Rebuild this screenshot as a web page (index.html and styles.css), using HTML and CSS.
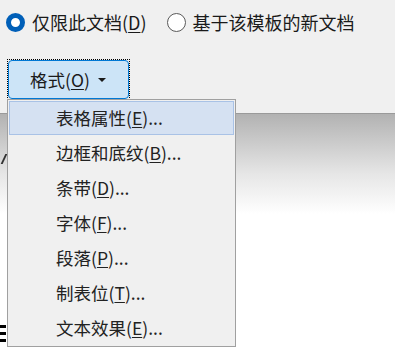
FILE: index.html
```html
<!DOCTYPE html>
<html>
<head>
    <title>格式</title>
    <link rel="stylesheet" href="styles.css">
</head>
<body>
    <div class="dialog">
        <div class="radio-row">
            <label class="radio">
                <span class="radio-dot checked"></span>
                <span>仅限此文档(<u>D</u>)</span>
            </label>
            <label class="radio">
                <span class="radio-dot"></span>
                <span>基于该模板的新文档</span>
            </label>
        </div>

        <div class="focus-ring">
            <div class="format-btn">
                <span>格式(<u>O</u>)</span>
                <span class="caret"></span>
            </div>
        </div>

        <div class="doc-area">
            <span class="doc-mark"></span>
            <div class="doc-lines">
                <span></span><span></span><span></span>
            </div>
        </div>

        <div class="menu">
            <div class="menu-item active">表格属性(<u>E</u>)...</div>
            <div class="menu-item">边框和底纹(<u>B</u>)...</div>
            <div class="menu-item">条带(<u>D</u>)...</div>
            <div class="menu-item">字体(<u>F</u>)...</div>
            <div class="menu-item">段落(<u>P</u>)...</div>
            <div class="menu-item">制表位(<u>T</u>)...</div>
            <div class="menu-item">文本效果(<u>E</u>)...</div>
        </div>
    </div>
</body>
</html>
```

FILE: styles.css
```css
html, body {
    margin: 0;
    padding: 0;
    height: 100%;
    overflow: hidden;
}
body {
    font-family: "Noto Sans CJK SC", "Noto Sans", sans-serif;
    font-size: 17.5px;
    color: #1a1a1a;
    background-color: #f0f0f0;
}
u {
    text-decoration-thickness: 1px;
    text-underline-offset: 2px;
}
.dialog {
    position: relative;
    height: 347px;
    display: flex;
    flex-direction: column;
}
.radio-row {
    display: flex;
    align-items: center;
    height: 44px;
    padding-left: 6px;
    gap: 20px;
    font-size: 18px;
}
.radio {
    display: flex;
    align-items: center;
    gap: 7px;
    line-height: 20px;
}
.radio-dot {
    width: 19px;
    height: 19px;
    box-sizing: border-box;
    border-radius: 50%;
    border: 1px solid #5a5a5a;
    background: #fff;
}
.radio-dot.checked {
    border: 5px solid #005fb8;
    background: #fff;
}
.focus-ring {
    margin-top: 15px;
    margin-left: 7px;
    width: 123px;
    height: 41px;
    box-sizing: border-box;
    border: 1px dotted #000;
}
.format-btn {
    height: 100%;
    box-sizing: border-box;
    border: 1px solid #0078d4;
    border-radius: 4px;
    background: #cce4f7;
    display: flex;
    align-items: center;
    padding-left: 21px;
    gap: 8px;
    line-height: 20px;
}
.caret {
    width: 0;
    height: 0;
    border-left: 4px solid transparent;
    border-right: 4px solid transparent;
    border-top: 4px solid #1a1a1a;
    margin-top: 1px;
}
.doc-area {
    position: relative;
    flex: 1;
    margin-top: 13px;
    border-top: 1px solid #9a9a9a;
    background: linear-gradient(#b2b2b2 0px, #e6e6e6 60px, #ffffff 100px, #ffffff 100%);
    overflow: hidden;
}
.doc-mark {
    position: absolute;
    left: 3px;
    top: 40px;
    width: 2px;
    height: 10px;
    background: #333;
    transform: skewX(-25deg);
}
.doc-lines {
    position: absolute;
    left: 0;
    top: 211px;
    display: flex;
    flex-direction: column;
    gap: 4px;
}
.doc-lines span {
    display: block;
    width: 6px;
    height: 3px;
    background: #000;
}
.menu {
    position: absolute;
    left: 7px;
    top: 99px;
    width: 229px;
    height: 248px;
    box-sizing: border-box;
    border: 1px solid #a0a0a0;
    background: #f0f0f0;
    padding: 1px;
}
.menu-item {
    height: 35px;
    box-sizing: border-box;
    border: 1px solid transparent;
    padding-left: 46px;
    display: flex;
    align-items: center;
    line-height: 20px;
    color: #222;
}
.menu-item.active {
    background: #d5e1f2;
    border-color: #a9c2e6;
    height: 34px;
}
```
